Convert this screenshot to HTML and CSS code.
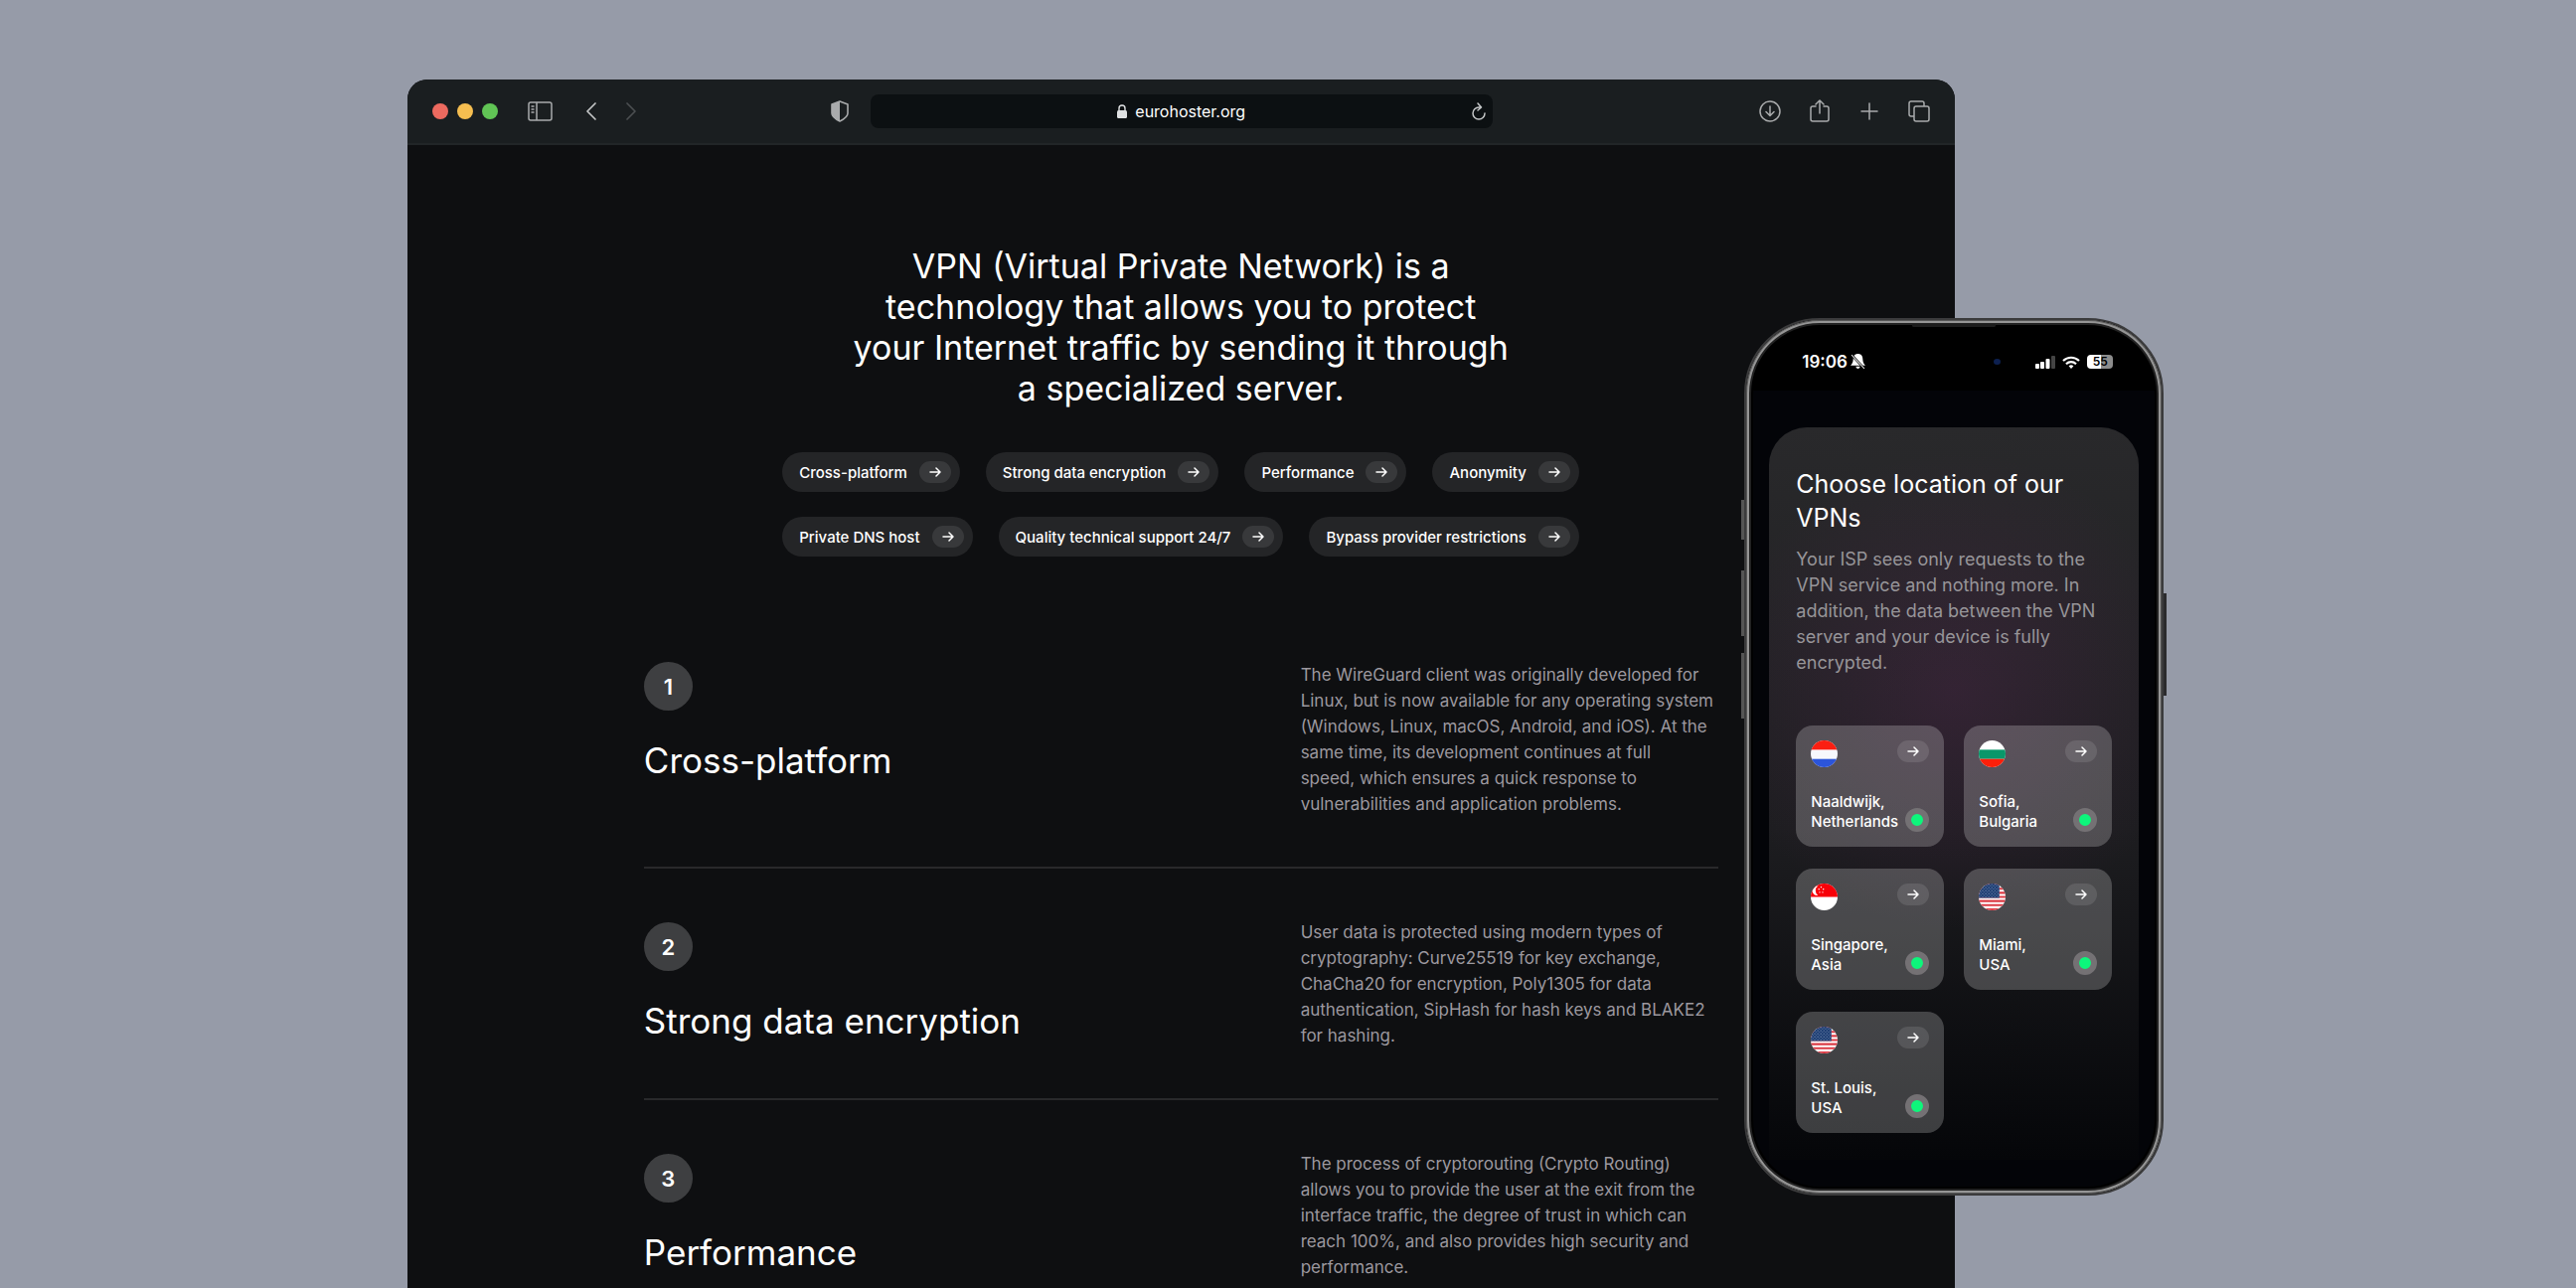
FILE: index.html
```html
<!DOCTYPE html>
<html lang="en">
<head>
    <meta charset="UTF-8">
    <meta name="viewport" content="width=device-width, initial-scale=1.0">
    <title>eurohoster.org</title>
    <link rel="stylesheet" href="styles.css">
</head>
<body>
    <!-- shared icons -->
    <svg class="defs" width="0" height="0">
        <symbol id="arrow" viewBox="0 0 12 10">
            <path d="M1 5h10M7 1l4 4-4 4" fill="none" stroke="currentColor" stroke-width="1.5" stroke-linecap="round" stroke-linejoin="round"/>
        </symbol>
        <clipPath id="round"><circle cx="13" cy="13" r="13"/></clipPath>
        <pattern id="stars" width="3" height="3" patternUnits="userSpaceOnUse">
            <rect width="3" height="3" fill="#17386f"/>
            <circle cx="0.8" cy="0.8" r="0.5" fill="#b9c6dc"/>
            <circle cx="2.3" cy="2.3" r="0.5" fill="#b9c6dc"/>
        </pattern>
        <symbol id="usa" viewBox="0 0 26 26">
            <g clip-path="url(#round)">
                <rect width="26" height="26" fill="#fff"/>
                <path d="M0 1h26M0 5h26M0 9h26M0 13h26M0 17h26M0 21h26M0 25h26" stroke="#dc3b45" stroke-width="2"/>
                <rect width="20" height="14" fill="url(#stars)"/>
            </g>
        </symbol>
    </svg>

    <div class="stage">
        <div class="browser">
            <header class="toolbar">
                <div class="side">
                    <div class="lights"><i class="red"></i><i class="yellow"></i><i class="green"></i></div>
                    <button class="tool sidebar" aria-label="Sidebar">
                        <svg width="26" height="20" viewBox="0 0 26 20" fill="none" stroke="currentColor" stroke-width="1.5">
                            <rect x="1" y="1" width="23" height="18" rx="2"/>
                            <path d="M9 1v18M3.500 5h3M3.500 8h3M3.500 11h3"/>
                        </svg>
                    </button>
                    <button class="tool back" aria-label="Back">
                        <svg width="12" height="20" viewBox="0 0 12 20" fill="none" stroke="currentColor" stroke-width="1.7" stroke-linecap="round" stroke-linejoin="round"><path d="M10 2L2 10l8 8"/></svg>
                    </button>
                    <button class="tool forward" aria-label="Forward">
                        <svg width="12" height="20" viewBox="0 0 12 20" fill="none" stroke="currentColor" stroke-width="1.7" stroke-linecap="round" stroke-linejoin="round"><path d="M2 2l8 8-8 8"/></svg>
                    </button>
                    <button class="tool shield" aria-label="Privacy report">
                        <svg width="18" height="22" viewBox="0 0 18 22">
                            <path d="M9 1L17 4v9c0 3.500-4 6-8 8-4-2-8-4.500-8-8V4z" fill="none" stroke="currentColor" stroke-width="1.6" stroke-linejoin="round"/>
                            <path d="M9 1L1 4v9c0 3.500 4 6 8 8z" fill="currentColor"/>
                        </svg>
                    </button>
                </div>
                <div class="address">
                    <svg width="10" height="15" viewBox="0 0 10 15"><rect y="6" width="10" height="8" rx="1.500" fill="#dfe1e2"/><path d="M2 7V4a3 3 0 0 1 6 0v3" fill="none" stroke="#dfe1e2" stroke-width="1.400"/></svg>
                    <span>eurohoster.org</span>
                    <button class="tool reload" aria-label="Reload">
                        <svg width="14" height="18" viewBox="0 0 14 18" fill="none" stroke="currentColor" stroke-width="1.500" stroke-linecap="round" stroke-linejoin="round"><path d="M8 5H7a6 6 0 1 0 6 6M6 1l3.500 4L6 8"/></svg>
                    </button>
                </div>
                <div class="side actions">
                    <button class="tool" aria-label="Downloads">
                        <svg width="24" height="24" viewBox="0 0 24 24" fill="none" stroke="currentColor" stroke-width="1.500" stroke-linecap="round" stroke-linejoin="round"><circle cx="12" cy="12" r="10"/><path d="M12 7v9M8 12.500l4 4 4-4"/></svg>
                    </button>
                    <button class="tool" aria-label="Share">
                        <svg width="24" height="24" viewBox="0 0 24 24" fill="none" stroke="currentColor" stroke-width="1.500" stroke-linecap="round" stroke-linejoin="round"><path d="M8 7H5a2 2 0 0 0-2 2v11a2 2 0 0 0 2 2h14a2 2 0 0 0 2-2V9a2 2 0 0 0-2-2h-3M12 14V1M8 5l4-4 4 4"/></svg>
                    </button>
                    <button class="tool" aria-label="New tab">
                        <svg width="24" height="24" viewBox="0 0 24 24" fill="none" stroke="currentColor" stroke-width="1.500" stroke-linecap="round"><path d="M12 4v16M4 12h16"/></svg>
                    </button>
                    <button class="tool" aria-label="Tabs">
                        <svg width="24" height="24" viewBox="0 0 24 24" fill="none" stroke="currentColor" stroke-width="1.500"><rect x="7" y="7" width="15" height="15" rx="2"/><path d="M7 17H4a2 2 0 0 1-2-2V4a2 2 0 0 1 2-2h11a2 2 0 0 1 2 2v3"/></svg>
                    </button>
                </div>
            </header>

            <main class="page">
                <h1>VPN (Virtual Private Network) is a<br>technology that allows you to protect<br>your Internet traffic by sending it through<br>a specialized server.</h1>
                <nav class="pills">
                    <div class="row">
                        <a href="#">Cross-platform <b><svg><use href="#arrow"/></svg></b></a>
                        <a href="#">Strong data encryption <b><svg><use href="#arrow"/></svg></b></a>
                        <a href="#">Performance <b><svg><use href="#arrow"/></svg></b></a>
                        <a href="#">Anonymity <b><svg><use href="#arrow"/></svg></b></a>
                    </div>
                    <div class="row">
                        <a href="#">Private DNS host <b><svg><use href="#arrow"/></svg></b></a>
                        <a href="#">Quality technical support 24/7 <b><svg><use href="#arrow"/></svg></b></a>
                        <a href="#">Bypass provider restrictions <b><svg><use href="#arrow"/></svg></b></a>
                    </div>
                </nav>

                <section class="features">
                    <article class="feature">
                        <div>
                            <span class="num">1</span>
                            <h2>Cross-platform</h2>
                        </div>
                        <p>The WireGuard client was originally developed for<br>Linux, but is now available for any operating system<br>(Windows, Linux, macOS, Android, and iOS). At the<br>same time, its development continues at full<br>speed, which ensures a quick response to<br>vulnerabilities and application problems.</p>
                    </article>
                    <article class="feature">
                        <div>
                            <span class="num">2</span>
                            <h2>Strong data encryption</h2>
                        </div>
                        <p>User data is protected using modern types of<br>cryptography: Curve25519 for key exchange,<br>ChaCha20 for encryption, Poly1305 for data<br>authentication, SipHash for hash keys and BLAKE2<br>for hashing.</p>
                    </article>
                    <article class="feature">
                        <div>
                            <span class="num">3</span>
                            <h2>Performance</h2>
                        </div>
                        <p>The process of cryptorouting (Crypto Routing)<br>allows you to provide the user at the exit from the<br>interface traffic, the degree of trust in which can<br>reach 100%, and also provides high security and<br>performance.</p>
                    </article>
                </section>
            </main>
        </div>

        <div class="phone">
            <i class="key mute"></i><i class="key up"></i><i class="key down"></i><i class="key power"></i>
            <i class="speaker"></i>
            <div class="screen">
                <div class="status">
                    <span class="time">19:06</span>
                    <svg width="15" height="16" viewBox="0 0 14 15"><path d="M7 0c3 0 4.500 2 4.500 5s1 4.500 2.500 6H0C1.500 9.500 2.500 8 2.500 5S4 0 7 0zM5 12h4a2 2 0 0 1-4 0z" fill="#fff"/><path d="M1 1l12 13" stroke="#000" stroke-width="2.200"/><path d="M1 1l12 13" stroke="#ddd"/></svg>
                    <i class="camera"></i>
                    <svg width="20" height="13" viewBox="0 0 20 13" fill="#fff"><rect y="8" width="4" height="5" rx="1"/><rect x="5" y="6" width="4" height="7" rx="1"/><rect x="10.500" y="3" width="4" height="10" rx="1"/><rect x="16" width="4" height="13" rx="1" fill="#444"/></svg>
                    <svg width="18" height="13" viewBox="0 0 18 13" fill="none" stroke="#fff" stroke-width="2.200"><path d="M1 5a11.500 11.500 0 0 1 16 0M4 8.200a7.200 7.200 0 0 1 10 0"/><path d="M6.600 10.300a3.600 3.600 0 0 1 4.800 0L9 13z" fill="#fff" stroke="none"/></svg>
                    <span class="battery">55</span>
                </div>
                <div class="panel">
                    <h3>Choose location of our<br>VPNs</h3>
                    <p>Your ISP sees only requests to the<br>VPN service and nothing more. In<br>addition, the data between the VPN<br>server and your device is fully<br>encrypted.</p>
                    <div class="locations">
                        <a class="location" href="#">
                            <svg class="flag" viewBox="0 0 26 26"><g clip-path="url(#round)"><rect width="26" height="26" fill="#f7f8fc"/><rect width="26" height="9" fill="#fb1f12"/><rect y="18" width="26" height="8" fill="#2c55da"/></g></svg>
                            <b><svg><use href="#arrow"/></svg></b>
                            <span>Naaldwijk,<br>Netherlands</span>
                            <i class="online"></i>
                        </a>
                        <a class="location" href="#">
                            <svg class="flag" viewBox="0 0 26 26"><g clip-path="url(#round)"><rect width="26" height="26" fill="#fff"/><rect y="9" width="26" height="9" fill="#0a976a"/><rect y="18" width="26" height="8" fill="#fb1f0a"/></g></svg>
                            <b><svg><use href="#arrow"/></svg></b>
                            <span>Sofia,<br>Bulgaria</span>
                            <i class="online"></i>
                        </a>
                        <a class="location" href="#">
                            <svg class="flag" viewBox="0 0 26 26"><g clip-path="url(#round)"><rect width="26" height="26" fill="#fff"/><rect width="26" height="13" fill="#f80008"/><path d="M7 2.500a4.600 4.600 0 1 0 0 9 5.500 5.500 0 0 1 0-9z" fill="#fff"/><path d="M10 3.500h.1M7.800 5.500h.1M12.200 5.500h.1M8.600 8.500h.1M11.500 8.500h.1" stroke="#fff" stroke-width="1.300" stroke-linecap="round"/></g></svg>
                            <b><svg><use href="#arrow"/></svg></b>
                            <span>Singapore,<br>Asia</span>
                            <i class="online"></i>
                        </a>
                        <a class="location" href="#">
                            <svg class="flag"><use href="#usa"/></svg>
                            <b><svg><use href="#arrow"/></svg></b>
                            <span>Miami,<br>USA</span>
                            <i class="online"></i>
                        </a>
                        <a class="location" href="#">
                            <svg class="flag"><use href="#usa"/></svg>
                            <b><svg><use href="#arrow"/></svg></b>
                            <span>St. Louis,<br>USA</span>
                            <i class="online"></i>
                        </a>
                    </div>
                </div>
            </div>
        </div>
    </div>
</body>
</html>
```
FILE: styles.css
```css
* {
    margin: 0;
    padding: 0;
    box-sizing: border-box;
}

body {
    height: 100vh;
    overflow: hidden;
    background: #969ba8;
    color: #fff;
    font-family: Inter, "Liberation Sans", sans-serif;
}

a {
    color: inherit;
    text-decoration: none;
}

svg {
    display: block;
}

.defs {
    position: absolute;
}

.stage {
    position: relative;
    height: 100%;
    margin: 0 16% 0 15.8%;
    padding-top: 80px;
}

/* browser window */
.browser {
    width: 88.1%;
    height: 100%;
    border-radius: 20px 20px 0 0;
    background: #0e0f11;
    overflow: hidden;
}

.toolbar {
    display: grid;
    grid-template-columns: 1fr 41.5% 1fr;
    align-items: center;
    height: 66px;
    padding: 0 24px 0 25px;
    background: #1a1e20;
    border-bottom: 2px solid #212527;
}

.side {
    display: flex;
    align-items: center;
}

.lights {
    display: flex;
    gap: 9px;
    margin-right: 30px;
}

.lights i {
    width: 16px;
    height: 16px;
    border-radius: 50%;
}

.red { background: #ed6a5f; }
.yellow { background: #f6be50; }
.green { background: #61c555; }

.tool {
    border: 0;
    background: none;
    color: #a9abac;
}

.back {
    margin-left: 32px;
    color: #c4c6c7;
}

.forward {
    margin-left: 28px;
    color: #4b4f51;
}

.shield {
    margin-left: auto;
    margin-right: 22px;
}

.actions {
    justify-content: flex-end;
    gap: 26px;
}

.address {
    position: relative;
    display: flex;
    align-items: center;
    justify-content: center;
    gap: 8px;
    height: 34px;
    border-radius: 8px;
    background: #0c1012;
    font-size: 16px;
}

.reload {
    position: absolute;
    right: 7px;
    color: #c4c6c7;
}

/* page */
.page {
    padding-top: 101px;
}

h1, h2, h3 {
    font-weight: 400;
}

h1 {
    font-size: 34px;
    line-height: 41px;
    text-align: center;
}

.pills {
    display: flex;
    flex-direction: column;
    gap: 25px;
    width: 802px;
    margin: 44px auto 106px;
}

.row {
    display: flex;
    gap: 26px;
    white-space: nowrap;
}

.row a {
    display: flex;
    align-items: center;
    gap: 12px;
    height: 40px;
    padding: 0 9px 0 17px;
    border-radius: 20px;
    background: #242527;
    font-size: 15px;
    font-weight: 500;
}

.row b, .location b {
    display: grid;
    place-items: center;
    width: 32px;
    height: 22px;
    border-radius: 11px;
    background: #38393b;
}

b svg {
    width: 12px;
    height: 10px;
}

.features {
    width: 69.4%;
    margin: 0 auto;
}

.feature {
    display: grid;
    grid-template-columns: 1fr 420px;
    padding-bottom: 50px;
    border-bottom: 2px solid #29292b;
    white-space: nowrap;
}

.feature + .feature {
    padding-top: 51px;
}

.feature p {
    color: #9c989f;
    font-size: 17px;
    line-height: 26px;
}

.num {
    display: grid;
    place-items: center;
    width: 49px;
    height: 49px;
    border-radius: 50%;
    background: #3e3f41;
    font-size: 22px;
    font-weight: 600;
}

.feature + .feature .num {
    margin-top: 3px;
}

.feature h2 {
    margin-top: 28px;
    font-size: 35px;
    line-height: 44px;
}

/* phone */
.phone {
    position: absolute;
    top: 320px;
    right: 0;
    width: 422px;
    height: 883px;
    padding: 7px;
    border-radius: 76px;
    background: #000;
    border: 2px solid #3b3b3c;
    box-shadow: inset 0 0 0 1px #555, inset 0 0 0 3px #959595, inset 0 0 0 5px #222;
}

.key {
    position: absolute;
    left: -5px;
    width: 3px;
    background: #555;
}

.mute { top: 181px; height: 40px; }
.up { top: 252px; height: 66px; }
.down { top: 335px; height: 66px; }

.power {
    top: 275px;
    left: auto;
    right: -5px;
    height: 103px;
    background: #2b2b2d;
}

.speaker {
    position: absolute;
    top: 4px;
    left: 167px;
    width: 84px;
    height: 3px;
    border-radius: 2px;
    background: #1c1c1c;
}

.screen {
    height: 100%;
    padding: 18px 16px;
    border-radius: 68px;
    background: linear-gradient(#000 64px, #030408 64px);
}

.status {
    display: flex;
    align-items: center;
    gap: 7px;
    height: 34px;
    padding: 0 26px 0 33px;
}

.time {
    font-size: 17px;
    font-weight: 600;
    margin-right: -4px;
}

.camera {
    width: 7px;
    height: 6px;
    margin: 0 28px 0 auto;
    border-radius: 50%;
    background: #0d2050;
}

.battery {
    width: 26px;
    height: 14px;
    border-radius: 4px;
    background: linear-gradient(90deg, #fff 55%, #8c8c8c 55%);
    color: #000;
    font-size: 12px;
    font-weight: 600;
    line-height: 14px;
    text-align: center;
}

.panel {
    height: 737px;
    margin-top: 49px;
    padding: 40px 27px 26px;
    border-radius: 38px 38px 0 0;
    background: radial-gradient(circle at 50% 36%, #6b2a6340, transparent 240px), linear-gradient(#29292b, #1d1d20 55%, #050609);
}

.panel h3 {
    font-size: 25px;
    line-height: 34px;
}

.panel p {
    margin-top: 12px;
    color: #979599;
    font-size: 18px;
    line-height: 26px;
    white-space: nowrap;
}

.locations {
    display: grid;
    grid-template-columns: 1fr 1fr;
    gap: 22px 20px;
    margin-top: 50px;
}

.location {
    display: grid;
    grid-template-columns: 1fr auto;
    align-content: space-between;
    height: 122px;
    padding: 15px;
    border-radius: 17px;
    background: #ffffff38;
    font-size: 15px;
    font-weight: 500;
    line-height: 20px;
    white-space: nowrap;
}

/* long names run up to the status dot */
.location span {
    width: 0;
}

.location b {
    background: #ffffff1c;
    grid-column: 2;
}

.flag {
    width: 27px;
    height: 27px;
}

.online {
    align-self: end;
    justify-self: end;
    width: 24px;
    height: 24px;
    border: 6px solid #747174;
    border-radius: 50%;
    background: #0df67b;
}
```
